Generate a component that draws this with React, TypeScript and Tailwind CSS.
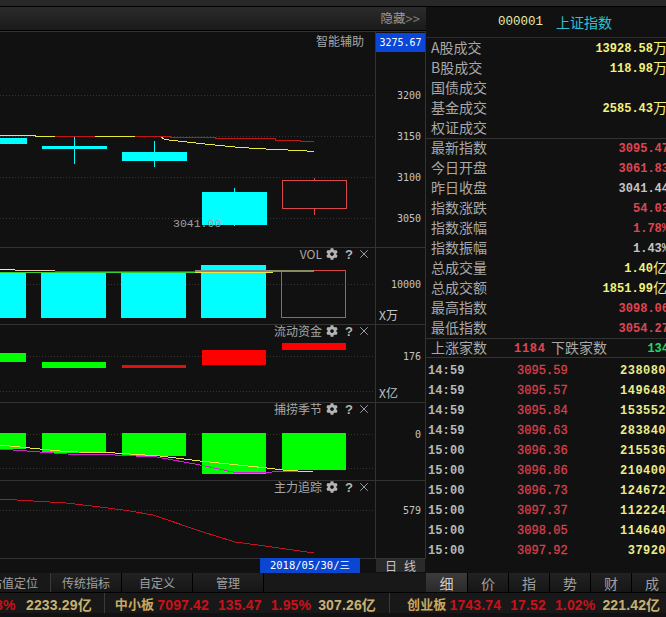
import type { ReactElement, ReactNode } from "react";
import { FaCog } from "react-icons/fa";
import { X } from "lucide-react";

const CJK = "font-['Noto_Sans_CJK_SC','Liberation_Sans',sans-serif]";
const MONO = "font-['Liberation_Mono','Noto_Sans_CJK_SC',monospace]";
const AXIS = "font-['DejaVu_Sans_Mono','Noto_Sans_CJK_SC',monospace]";
const BOLD = "font-['Liberation_Sans','Noto_Sans_CJK_SC',sans-serif]";

const summaryRows = [
  { label: "A股成交", value: "13928.58", unit: "万" },
  { label: "B股成交", value: "118.98", unit: "万" },
  { label: "国债成交", value: "" },
  { label: "基金成交", value: "2585.43", unit: "万" },
  { label: "权证成交", value: "" },
];

const indexRows = [
  { label: "最新指数", value: "3095.47", color: "text-[#e04552]" },
  { label: "今日开盘", value: "3061.83", color: "text-[#e04552]" },
  { label: "昨日收盘", value: "3041.44", color: "text-[#c4c4c4]" },
  { label: "指数涨跌", value: "54.03", color: "text-[#e04552]" },
  { label: "指数涨幅", value: "1.78%", color: "text-[#e04552]" },
  { label: "指数振幅", value: "1.43%", color: "text-[#c4c4c4]" },
  { label: "总成交量", value: "1.40", unit: "亿", color: "text-[#f2f27c]" },
  { label: "总成交额", value: "1851.99", unit: "亿", color: "text-[#f2f27c]" },
  { label: "最高指数", value: "3098.06", color: "text-[#e04552]" },
  { label: "最低指数", value: "3054.27", color: "text-[#e04552]" },
];

const ticks = [
  ["14:59", "3095.59", "238080"],
  ["14:59", "3095.57", "149648"],
  ["14:59", "3095.84", "153552"],
  ["14:59", "3096.63", "283840"],
  ["15:00", "3096.36", "215536"],
  ["15:00", "3096.86", "210400"],
  ["15:00", "3096.73", "124672"],
  ["15:00", "3097.37", "112224"],
  ["15:00", "3098.05", "114640"],
  ["15:00", "3097.92", "37920"],
];

function Grid({ ys }: { ys: number[] }): ReactElement {
  return (
    <>
      {ys.map((y) => (
        <line key={y} x1="0" x2="375" y1={y + 0.5} y2={y + 0.5} stroke="#343434" strokeDasharray="1 2" />
      ))}
    </>
  );
}

function Bar({ x, w = 65, y1, y2, fill }: { x: number; w?: number; y1: number; y2: number; fill: string }): ReactElement {
  return <rect x={x} y={y1} width={w} height={y2 - y1} fill={fill} />;
}

function Line({ points, color, width = 1 }: { points: string; color: string; width?: number }): ReactElement {
  return <polyline points={points} fill="none" stroke={color} strokeWidth={width} />;
}

// one chart pane, its svg viewBox uses page coordinates so the drawing keeps the picture's numbers
function Pane({
  top,
  height,
  title,
  tools = true,
  labels,
  unit,
  children,
  over,
  axisTop,
}: {
  top: number;
  height: number;
  title: string;
  tools?: boolean;
  labels: { text: string; y: number }[];
  unit?: string;
  children: ReactNode;
  over?: ReactNode;
  axisTop?: ReactNode;
}): ReactElement {
  return (
    <div className="flex shadow-[inset_0_1px_0_#333]" style={{ height }}>
      <div className="relative w-[375px] overflow-hidden">
        <svg className="block" width="375" height={height} viewBox={`0 ${top} 375 ${height}`} shapeRendering="crispEdges">
          {children}
        </svg>
        <div
          className={`absolute flex h-[14px] items-center text-[12px] leading-none text-[#a8a8a8] ${CJK} ${
            tools ? "right-[4px] top-0" : "right-[11px] top-[3px]"
          }`}
        >
          <span>{title}</span>
          {tools && (
            <>
              <FaCog className="ml-[4px] text-[#b4b4b4]" size={12} />
              <span className={`ml-[6px] w-[10px] text-center text-[13px] font-bold text-[#b4b4b4] ${BOLD}`}>?</span>
              <X className="ml-[3px] text-[#c8c8c8]" size={14} strokeWidth={1.3} />
            </>
          )}
        </div>
        {over}
      </div>
      <div className="relative w-[51px] border-x border-[#333]">
        {axisTop}
        {labels.map((label) => (
          <span
            key={label.text}
            className={`absolute right-[4px] text-[10px] leading-[12px] text-[#c4c4c4] ${AXIS}`}
            style={{ top: label.y - top - 5 }}
          >
            {label.text}
          </span>
        ))}
        {unit && (
          <span className={`absolute bottom-[2px] left-[3px] text-[12px] leading-[14px] text-[#c4c4c4] ${CJK}`}>{unit}</span>
        )}
      </div>
    </div>
  );
}

function Row({ label, children }: { label: string; children?: ReactNode }): ReactElement {
  return (
    <div className="flex h-[20px] items-center justify-between pl-[5px]">
      <span className={`pb-[2px] text-[14px] font-normal leading-none text-[#a8a8a8] ${CJK}`}>{label}</span>
      {children}
    </div>
  );
}

function Value({ value, unit, color }: { value: string; unit?: string; color?: string }): ReactElement {
  return (
    <span className={`flex h-[20px] items-center pt-[1px] leading-none ${color ?? ""} ${unit ? "mr-[2px]" : ""}`}>
      {value}
      {unit && <span className={`mb-[3px] text-[14px] font-normal leading-none ${CJK}`}>{unit}</span>}
    </span>
  );
}

function Tick({ time, price, volume }: { time: string; price: string; volume: string }): ReactElement {
  return (
    <div className={`relative flex h-[20px] items-center text-[12px] font-bold ${MONO}`}>
      <span className="ml-[2px] w-[89px] tracking-[0.1px] text-[#b8b8b8]">{time}</span>
      <span className="w-[51px] font-normal tracking-[0.05px] text-[#d8404c] [-webkit-text-stroke:0.3px_#d8404c]">{price}</span>
      <span className="ml-auto mr-[3px] tracking-[0.45px] text-[#ecec8c]">{volume}</span>
    </div>
  );
}

function TickerItem({ name, price, change, pct, amount }: { name: string; price: string; change: string; pct: string; amount: string }): ReactElement {
  return (
    <>
      <span className="text-[13px] text-[#c8a860]">{name}</span>
      <span className="ml-[3px] text-[#cc1018]">{price}</span>
      <span className="ml-[9px] text-[#cc1018]">{change}</span>
      <span className="ml-[9px] text-[#cc1018]">{pct}</span>
      <span className="ml-[7px] text-[#c8b070]">{amount}</span>
    </>
  );
}

export default function App(): ReactElement {
  return (
    <div className="h-[617px] w-[666px] overflow-hidden bg-[#111] select-none">
      <div className="h-[7px] border-b border-black bg-[#282828]" />

      <div className="flex h-[566px]">
        {/* left: stacked chart panes */}
        <div className="w-[426px] shrink-0">
          <div className="flex h-[24px] items-center justify-end border-b border-black bg-gradient-to-b from-[#2c2c2c] to-[#1a1a1a] pr-[6px]">
            <span className={`text-[12.5px] leading-none text-[#9a9a9a] ${CJK}`}>隐藏</span>
            <span className={`text-[12px] leading-none text-[#777] ${AXIS}`}>&gt;&gt;</span>
          </div>

          <Pane
            top={31}
            height={216}
            title="智能辅助"
            tools={false}
            labels={[
              { text: "3200", y: 95 },
              { text: "3150", y: 136 },
              { text: "3100", y: 177 },
              { text: "3050", y: 218 },
            ]}
            axisTop={
              <div className={`mt-[2px] flex h-[19px] items-center justify-center bg-[#0a46d8] text-[10px] leading-none text-white ${AXIS}`}>
                3275.67
              </div>
            }
            over={<span className={`absolute left-[173px] top-[187px] text-[11.5px] leading-[12px] text-[#a0a0a0] ${MONO}`}>3041.00</span>}
          >
            <Grid ys={[95, 136, 177, 218]} />
            <Bar x={0} w={27} y1={138} y2={144} fill="#00ffff" />
            <Bar x={42} y1={146} y2={149} fill="#00ffff" />
            <rect x={74} y={137} width={1} height={27} fill="#00ffff" />
            <Bar x={122} y1={152} y2={161} fill="#00ffff" />
            <rect x={154} y={141} width={1} height={26} fill="#00ffff" />
            <Bar x={202} y1={192} y2={225} fill="#00ffff" />
            <rect x={234} y={188} width={1} height={38} fill="#00ffff" />
            <rect x={314} y={178} width={1} height={3} fill="#d84848" />
            <rect x={314} y={208} width={1} height={7} fill="#d84848" />
            <rect x={282.5} y={180.5} width={64} height={28} fill="none" stroke="#d84848" />
            <Line points="0,135.5 35,135.5 35,136.5 160,136.5 165,139.5 200,143.5 240,147.5 275,149.5 300,150.5 314,151.5" color="#e8e840" />
            <Line points="55,136.5 95,136.5" color="#c01818" />
            <Line points="135,136.5 170,136.5 170,137.5 215,137.5 215,138.5 275,138.5 275,140.5 300,140.5 300,141.5 314,141.5" color="#c01818" />
          </Pane>

          <Pane top={247} height={77} title="VOL" labels={[{ text: "10000", y: 284 }]} unit="X万">
            <Grid ys={[284]} />
            <Bar x={0} w={26} y1={273} y2={318} fill="#00ffff" />
            <Bar x={41} y1={273} y2={318} fill="#00ffff" />
            <Bar x={121} y1={272} y2={318} fill="#00ffff" />
            <Bar x={201} y1={265} y2={318} fill="#00ffff" />
            <rect x={281.5} y={270.5} width={64} height={47} fill="none" stroke="#d84848" />
            <Line points="0,269.5 15,269.5" color="#f0f0b0" />
            <Line points="15,270.5 55,270.5" color="#f0c0b0" />
            <Line points="0,272.5 195,272.5" color="#30d030" />
            <Line points="55,271.5 195,271.5" color="#a020a0" />
            <Line points="195,272.5 273,272.5" color="#e8e840" />
            <Line points="195,271 272,271" color="#8a8a8a" width={2} />
            <Line points="272,270.5 314,270.5" color="#8a8a60" width={2} />
          </Pane>

          <Pane top={324} height={78} title="流动资金" labels={[{ text: "176", y: 356 }]} unit="X亿">
            <Grid ys={[356, 391]} />
            <Bar x={0} w={26} y1={353} y2={362} fill="#00ff00" />
            <Bar x={42} w={64} y1={362} y2={368} fill="#00ff00" />
            <Bar x={122} w={64} y1={365} y2={368} fill="#e01010" />
            <Bar x={202} w={64} y1={350} y2={365} fill="#ff0000" />
            <Bar x={282} w={64} y1={343} y2={350} fill="#ff0000" />
          </Pane>

          <Pane top={402} height={78} title="捕捞季节" labels={[{ text: "0", y: 434 }]}>
            <Grid ys={[434, 468]} />
            <Bar x={0} w={26} y1={433} y2={449} fill="#00ff00" />
            <Bar x={42} w={64} y1={433} y2={453} fill="#00ff00" />
            <Bar x={122} w={64} y1={433} y2={456} fill="#00ff00" />
            <Bar x={202} w={64} y1={433} y2={474} fill="#00ff00" />
            <Bar x={282} w={64} y1={433} y2={470} fill="#00ff00" />
            <Line points="0,449 40,452 67,454 115,455 157,457 200,465 233,472 267,473 277,471 313,471" color="#d020d8" />
            <Line points="0,445 40,449 67,451.7 115,453 160,456 200,461 267,468 283,470 313,472" color="#e8e840" />
          </Pane>

          <Pane top={480} height={78} title="主力追踪" labels={[{ text: "579", y: 510 }]}>
            <Grid ys={[510]} />
            <Line points="0,499 33,501 66,503 100,507 130,511 153,515 200,531 235,542 265,546 300,551 314,553" color="#c81020" />
          </Pane>

          <div className="flex h-[15px] shadow-[inset_0_1px_0_#333]">
            <div className="flex w-[375px] justify-end pr-[15px]">
              <div className="flex h-[15px] w-[100px] items-center justify-center bg-[#0a46d0] leading-none text-white">
                <span className={`text-[10.5px] ${AXIS}`}>2018/05/30/三</span>
              </div>
            </div>
            <div className={`ml-[1px] flex h-[13px] w-[49px] items-center justify-center gap-[7px] self-center bg-[#2a2a2a] text-[12px] leading-none text-[#c8c8c8] ${CJK}`}>
              <span>日</span>
              <span>线</span>
            </div>
          </div>
        </div>

        {/* right: quote panel */}
        <div className="w-[243px] shrink-0">
          <div className="flex h-[31px] items-center border-b border-[#2c2c2c] pl-[72px]">
            <span className={`text-[12.5px] leading-none text-[#e8e8a8] ${MONO}`}>000001</span>
            <span className={`ml-[13px] text-[14px] leading-none text-[#30c0d0] ${CJK}`}>上证指数</span>
          </div>

          <div className={`text-[12px] font-bold text-[#f2f27c] ${MONO}`}>
            {summaryRows.map((row) => (
              <Row key={row.label} label={row.label}>
                {row.value && <Value value={row.value} unit={row.unit} />}
              </Row>
            ))}
          </div>

          <div className={`text-[12px] font-bold shadow-[inset_0_1px_0_#333] ${MONO}`}>
            {indexRows.map((row) => (
              <Row key={row.label} label={row.label}>
                <Value value={row.value} unit={row.unit} color={row.color} />
              </Row>
            ))}
          </div>

          <div className="flex h-[20px] items-center pl-[5px] shadow-[inset_0_1px_0_#333,inset_0_-1px_0_#333]">
            <span className={`w-[83px] pb-[2px] text-[14px] leading-none text-[#a8a8a8] ${CJK}`}>上涨家数</span>
            <span className={`w-[37px] pt-[1px] text-[12px] font-bold tracking-[0.7px] text-[#e04552] ${MONO}`}>1184</span>
            <span className={`pb-[2px] text-[14px] leading-none text-[#a8a8a8] ${CJK}`}>下跌家数</span>
            <span className={`ml-auto pt-[1px] text-[12px] font-bold text-[#20d868] ${MONO}`}>134</span>
          </div>

          <div className="pt-[3px]">
            {ticks.map((tick, i) => (
              <Tick key={i} time={tick[0]} price={tick[1]} volume={tick[2]} />
            ))}
          </div>
        </div>
      </div>

      {/* tab strip */}
      <div className={`flex h-[19px] items-stretch text-[12px] leading-none text-[#a0a0a0] ${CJK}`}>
        <div className="flex w-[426px] shrink-0 bg-[#181818]">
          <div className="flex w-[51px] items-center justify-end border-r border-[#3a3a3a] pr-[12px]">
            <span className="whitespace-nowrap">估值定位</span>
          </div>
          {["传统指标", "自定义", "管理"].map((tab) => (
            <div key={tab} className="flex w-[71px] items-center justify-center border-r border-black bg-gradient-to-b from-[#222] to-[#161616]">
              {tab}
            </div>
          ))}
        </div>
        <div className="flex flex-1 text-[14px]">
          {["细", "价", "指", "势", "财", "成"].map((tab, i) => (
            <div
              key={tab}
              className={
                i === 0
                  ? "flex w-[41px] shrink-0 items-center justify-center bg-gradient-to-b from-[#3c3c3c] to-[#2a2a2a] text-[#d0d0d0]"
                  : "flex w-[41px] shrink-0 items-center justify-center border-l border-black bg-gradient-to-b from-[#222] to-[#161616]"
              }
            >
              {tab}
            </div>
          ))}
        </div>
      </div>

      {/* bottom index ticker */}
      <div className={`flex h-[21px] items-center whitespace-nowrap border-t border-black bg-[#181818] pt-[3px] text-[14px] font-bold leading-none tracking-[0.15px] ${BOLD}`}>
        <span className="-ml-[9px] mr-[9px] w-[26px] shrink-0 text-[#cc1018]">.8%</span>
        <span className="text-[#c8b070]">2233.29亿</span>
        <span className="ml-[12px] mr-[10px] -mt-[3px] h-[20px] border-l border-[#3a3a3a]" />
        <TickerItem name="中小板" price="7097.42" change="135.47" pct="1.95%" amount="307.26亿" />
        <span className="ml-[13px] mr-[17px] -mt-[3px] h-[20px] border-l border-[#3a3a3a]" />
        <TickerItem name="创业板" price="1743.74" change="17.52" pct="1.02%" amount="221.42亿" />
      </div>
    </div>
  );
}
